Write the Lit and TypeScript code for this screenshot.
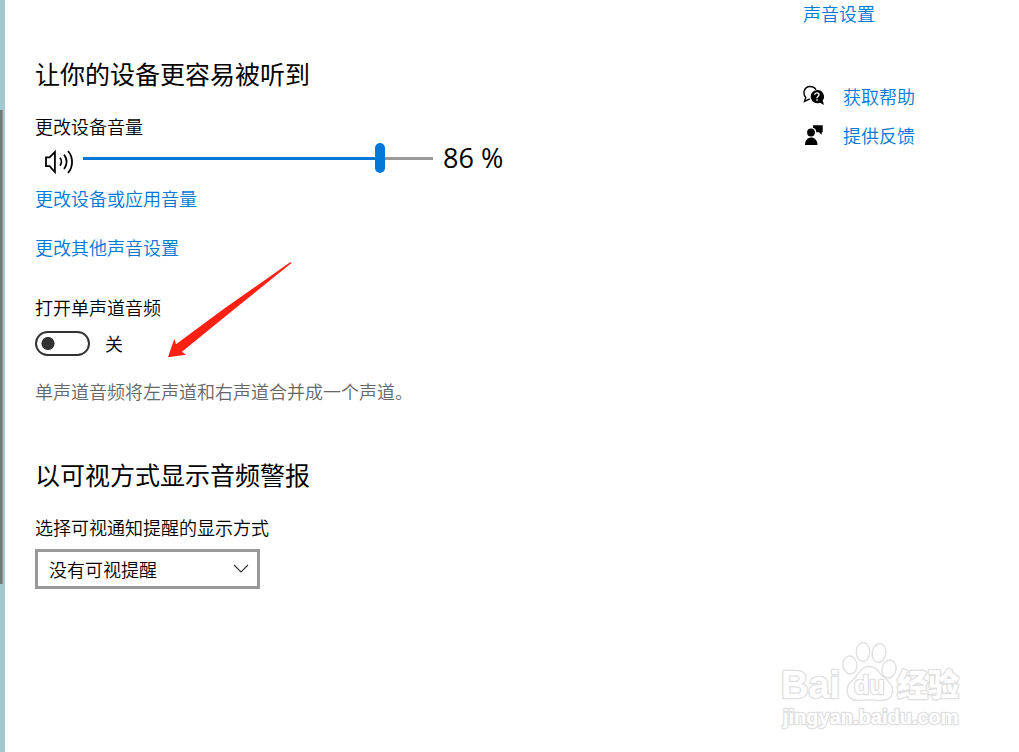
import { LitElement, html, css } from "lit";
import { customElement, state } from "lit/decorators.js";

@customElement("volume-slider")
class VolumeSlider extends LitElement {
  @state() private value = 86;

  static styles = css`
    :host { display: block; }
    .row { display: flex; align-items: center; height: 42px; }
    .icon { width: 32px; height: 26px; margin: 4px 7px 0 9px; flex: none; }
    input {
      appearance: none; -webkit-appearance: none;
      width: 350px; min-width: 0; height: 30px; margin: 0 10px 2px 0; padding: 0;
      background: linear-gradient(to right, #0078d7 var(--fill), #999 var(--fill)) center / 100% 3px no-repeat;
    }
    input::-webkit-slider-thumb {
      -webkit-appearance: none;
      width: 10px; height: 30px; border-radius: 5px; background: #0078d7;
    }
    input::-moz-range-thumb {
      width: 10px; height: 30px; border: 0; border-radius: 5px; background: #0078d7;
    }
    output { font: 400 27px/32px "Open Sans", "Noto Sans", sans-serif; white-space: nowrap; margin-bottom: 2px; }
  `;

  render() {
    return html`
      <div class="row">
        <svg class="icon" viewBox="0 0 32 26" fill="none" stroke="#000" stroke-width="1.8" aria-hidden="true">
          <path d="M2 9.300h3.600l5.300-5.300v20l-5.300-5.800H2z" />
          <path d="M16 9.800c1.800 2.200 1.800 5.600 0 7.800M20 6.600c3.500 4.200 3.500 10.200 0 14.400M24 3c5.400 6.200 5.400 15.800 0 22" />
        </svg>
        <input id="volume" type="range" min="0" max="100" aria-label="更改设备音量"
          style="--fill:${this.value}%"
          .value=${String(this.value)}
          @input=${(e: Event) => (this.value = Number((e.target as HTMLInputElement).value))} />
        <output for="volume">${this.value} %</output>
      </div>
    `;
  }
}

@customElement("app-root")
class AppRoot extends LitElement {
  @state() private mono = false;

  static styles = css`
    :host {
      display: block; color: #000; background: #fff;
      font: 350 18px/24px "Noto Sans CJK SC", sans-serif;
    }
    * { box-sizing: border-box; }
    .page { display: grid; grid-template-columns: 5px minmax(0, 1fr) 216px; min-height: 100vh; }
    .edge { background: #a3c9d0; padding-top: 110px; }
    .thumb { width: 3px; height: 474px; background: #777; border-right: 1px solid #8e9698; }
    main { padding: 55px 30px 0; }
    h2 { margin: 0; font-size: 25px; line-height: 36px; font-weight: 400; }
    p { margin: 0; }
    a { color: #0078d7; text-decoration: none; }
    .label { display: block; }
    .first { margin-top: 23px; }
    .link { display: block; margin-bottom: 25px; }
    .volume { margin: 0 0 6px; }
    .mono { margin-top: 36px; }
    .toggle { display: flex; align-items: center; gap: 15px; margin-top: 11px; height: 26px; }
    .toggle input {
      appearance: none; -webkit-appearance: none; margin: 0; width: 55px; height: 25px;
      border: 2px solid #333; border-radius: 13px;
      background: radial-gradient(circle at 11px 50%, #333 6px, transparent 7px);
    }
    .toggle input:checked {
      border-color: #0078d7;
      background: radial-gradient(circle at 40px 50%, #fff 6px, #0078d7 7px);
    }
    .note { margin-top: 23px; color: #666; }
    .alerts { margin-top: 53px; }
    .select { display: grid; width: 225px; max-width: 100%; margin-top: 10px; align-items: center; }
    .select > * { grid-area: 1 / 1; }
    select {
      appearance: none; -webkit-appearance: none; width: 100%; height: 40px; padding: 0 40px 0 11px;
      border: 3px solid #999; border-radius: 0; background: #fff; color: #000; font: inherit;
    }
    .chevron { justify-self: end; margin-right: 11px; width: 16px; height: 10px; pointer-events: none; }
    aside { display: flex; flex-direction: column; }
    .related { margin-top: 1px; }
    .help { display: grid; grid-template-columns: 22px auto; column-gap: 18px; row-gap: 15px; margin: 59px 0 0; align-items: center; justify-content: start; }
    .help svg { width: 22px; height: 24px; }
    .arrow { position: absolute; left: 166px; top: 260px; width: 128px; height: 100px; pointer-events: none; }
    .mark { position: absolute; right: 50px; bottom: 16px; width: 190px; height: 100px; pointer-events: none; }
    .mark text { paint-order: stroke; stroke-linejoin: round; font-family: "Liberation Sans", sans-serif; font-weight: 700; }
    .mark .brand { font-size: 38px; }
    .mark .paw { font-size: 25px; }
    .mark .cjk { font-family: "Noto Sans CJK SC", sans-serif; font-size: 31px; font-weight: 900; }
    .mark .url { font-size: 20px; }
  `;

  render() {
    return html`
      <div class="page">
        <div class="edge"><div class="thumb"></div></div>
        <main>
          <h2>让你的设备更容易被听到</h2>
          <p class="label first">更改设备音量</p>
          <volume-slider class="volume"></volume-slider>
          <a class="link" href="#apps">更改设备或应用音量</a>
          <a class="link" href="#other">更改其他声音设置</a>
          <label class="label mono" for="mono">打开单声道音频</label>
          <div class="toggle">
            <input id="mono" type="checkbox" role="switch" .checked=${this.mono}
              @change=${(e: Event) => (this.mono = (e.target as HTMLInputElement).checked)} />
            <span>${this.mono ? "开" : "关"}</span>
          </div>
          <p class="note">单声道音频将左声道和右声道合并成一个声道。</p>
          <h2 class="alerts">以可视方式显示音频警报</h2>
          <label class="label first" for="visual">选择可视通知提醒的显示方式</label>
          <div class="select">
            <select id="visual"><option>没有可视提醒</option></select>
            <svg class="chevron" viewBox="0 0 16 10" fill="none" stroke="#333" stroke-width="1.1" aria-hidden="true"><path d="M1 1l7 7 7-7" /></svg>
          </div>
        </main>
        <aside>
          <a class="related" href="#sound">声音设置</a>
          <div class="help">
            <svg viewBox="0 0 22 24" aria-hidden="true">
              <path d="M6.800 14.800 1.500 17.300l1.300-3.800C-.8 9.500 1.200 2.600 7 2.500c3 0 5 1.300 6 3.300" fill="none" stroke="#000" stroke-width="1.400" />
              <path d="M14 6a6.600 6.600 0 1 0 2.800 12.700l4.200 2.400-1.300-4.600A6.600 6.600 0 0 0 14 6z" fill="#000" />
              <path d="M11.800 10.800c.2-2.600 4.300-2.500 4.200 0-.1 1.500-2 1.500-2 3.500M14 15.200v1.500" fill="none" stroke="#fff" stroke-width="1.400" />
            </svg>
            <a href="#help">获取帮助</a>
            <svg viewBox="0 0 22 24" aria-hidden="true">
              <circle cx="8" cy="9.500" r="3.900" />
              <path d="M2 22c0-10 12.500-10 12.500 0zM10 2.300h9.700v6.900h-1v2.600l-2.800-2.600h-2.600C13.300 6.500 12 5.200 10 4.700z" />
            </svg>
            <a href="#feedback">提供反馈</a>
          </div>
        </aside>
      </div>
      <svg class="arrow" viewBox="0 0 128 100" aria-hidden="true">
        <path d="M124.500 2 59 48 10 84.300 8.300 78.700 2 97.300l18-2.600-4-3L62.300 54 125.500 3z" fill="#ff2012" />
      </svg>
      <svg class="mark" viewBox="0 0 190 100" role="img" aria-label="Baidu 经验">
        <g fill="#fff" stroke="#e0e0e0" stroke-width="1.4">
          <ellipse cx="71" cy="29" rx="7" ry="9" transform="rotate(-8 71 29)" />
          <ellipse cx="84" cy="16" rx="6.800" ry="9.500" />
          <ellipse cx="100" cy="17" rx="6.800" ry="9.500" transform="rotate(10 100 17)" />
          <ellipse cx="110" cy="33" rx="7" ry="9" transform="rotate(12 110 33)" />
          <path d="M90 30.500c7 0 9 5 13 9 5 4.500 10.500 8.500 10.500 15 0 7-5 10.500-12 10-8-.8-15-.8-22 0-7 .5-11.500-4-11.500-10.500 0-6 5-9 9.500-14 3.500-4.500 6-9.500 12.500-9.500z" />
        </g>
        <g fill="#fff" stroke="#e0e0e0" stroke-width="2.600">
          <text class="brand" x="2" y="62">Bai</text>
          <text class="paw" x="75" y="58">du</text>
          <text class="cjk" x="118" y="60">经验</text>
          <text class="url" x="4" y="88">jingyan.baidu.com</text>
        </g>
      </svg>
    `;
  }
}
